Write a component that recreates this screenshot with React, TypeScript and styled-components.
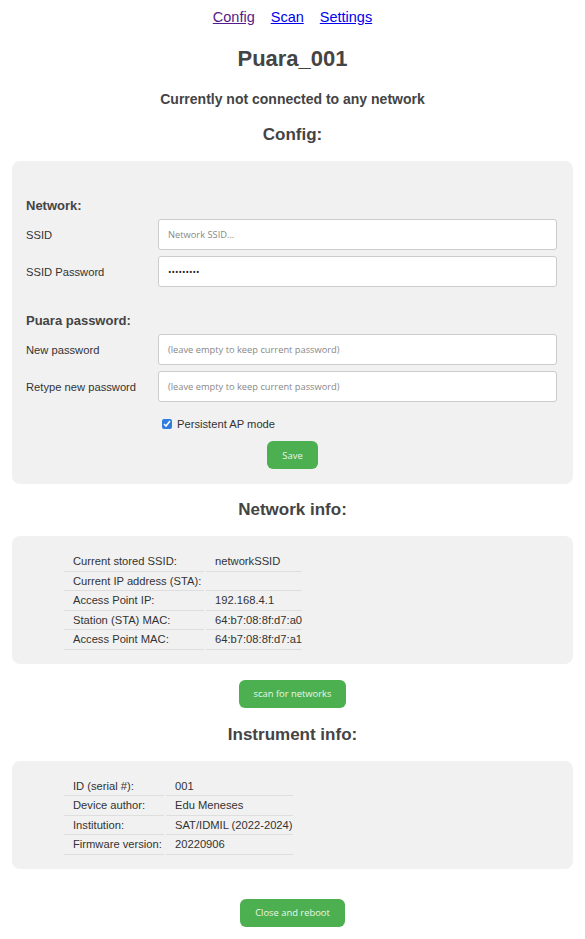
import styled, { createGlobalStyle } from 'styled-components';

const GlobalStyle = createGlobalStyle`
  body {
    margin: 0;
    background: #fff;
    font-family: "Liberation Sans", Arial, sans-serif;
    color: #444;
  }
`;

const Page = styled.div`
  padding: 0 12px 10px;
  display: flex;
  flex-direction: column;
  align-items: stretch;
`;

const Nav = styled.nav`
  display: flex;
  justify-content: center;
  gap: 16px;
  padding-top: 9px;
  font-size: 14.5px;
`;

const NavLink = styled.a<{ visited?: boolean }>`
  color: ${p => (p.visited ? '#551a8b' : '#0000ee')};
  text-decoration: underline;
`;

const Title = styled.h1`
  margin: 21px 0 0;
  text-align: center;
  font-size: 22px;
  color: #444;
`;

const Status = styled.h3`
  margin: 19px 0 0;
  text-align: center;
  font-size: 14px;
  color: #444;
`;

const SectionTitle = styled.h2<{ offset?: number }>`
  margin: ${p => p.offset ?? 0}px 0 0;
  text-align: center;
  font-size: 17px;
  color: #444;
`;

const Panel = styled.div`
  background: #f1f1f1;
  border-radius: 8px;
`;

const FormPanel = styled(Panel)`
  padding: 37px 14px 15px;
  display: flex;
  flex-direction: column;
`;

const Group = styled.div<{ spaced?: boolean }>`
  font-weight: bold;
  font-size: 13px;
  color: #444;
  margin: ${p => (p.spaced ? '20px' : '0')} 0 6px;
`;

const FieldRow = styled.div`
  display: grid;
  grid-template-columns: 132px 1fr;
  align-items: center;
  margin-bottom: 6px;
  font-size: 11.2px;
  color: #333;
`;

const Input = styled.input`
  height: 31px;
  box-sizing: border-box;
  border: 1px solid #ccc;
  border-radius: 3px;
  background: #fff;
  padding: 0 9px;
  margin-right: 2px;
  font-family: "Open Sans", sans-serif;
  font-size: 9.3px;
  color: #222;
  &::placeholder {
    color: #888;
  }
`;

const CheckRow = styled.label`
  display: flex;
  align-items: center;
  gap: 5px;
  margin: 10px 0 0 136px;
  font-size: 11.2px;
  color: #333;
  input {
    margin: 0;
    width: 10px;
    height: 10px;
    accent-color: #2f7de1;
  }
`;

const GreenButton = styled.button<{ offset?: number }>`
  align-self: center;
  margin-top: ${p => p.offset ?? 0}px;
  background: #4caf50;
  color: #eaf6ea;
  border: none;
  border-radius: 6px;
  font-family: "Open Sans", sans-serif;
  font-size: 9.4px;
  height: 28px;
  padding: 0 15px;
`;

const InfoPanel = styled(Panel)`
  padding: 16px 50px 14px;
`;

const InfoTable = styled.table`
  border-spacing: 2px 0;
  font-size: 11.2px;
  color: #333;
  td {
    border-bottom: 1px solid #dedede;
    height: 18.5px;
    padding: 0 0 0 9px;
    white-space: nowrap;
  }
`;

const Stack = styled.div`
  display: flex;
  flex-direction: column;
  gap: 16px;
  margin-top: 18px;
`;

const networkInfo: [string, string][] = [
  ['Current stored SSID:', 'networkSSID'],
  ['Current IP address (STA):', ''],
  ['Access Point IP:', '192.168.4.1'],
  ['Station (STA) MAC:', '64:b7:08:8f:d7:a0'],
  ['Access Point MAC:', '64:b7:08:8f:d7:a1'],
];

const instrumentInfo: [string, string][] = [
  ['ID (serial #):', '001'],
  ['Device author:', 'Edu Meneses'],
  ['Institution:', 'SAT/IDMIL (2022-2024)'],
  ['Firmware version:', '20220906'],
];

function Info({ rows, col }: { rows: [string, string][]; col: number }) {
  return (
    <InfoTable>
      <tbody>
        {rows.map(([k, v]) => (
          <tr key={k}>
            <td style={{ width: col }}>{k}</td>
            <td>{v}</td>
          </tr>
        ))}
      </tbody>
    </InfoTable>
  );
}

export default function App() {
  return (
    <>
      <GlobalStyle />
      <Page>
        <Nav>
          <NavLink href="#" visited>Config</NavLink>
          <NavLink href="#">Scan</NavLink>
          <NavLink href="#">Settings</NavLink>
        </Nav>
        <Title>Puara_001</Title>
        <Status>Currently not connected to any network</Status>
        <Stack>
          <SectionTitle>Config:</SectionTitle>
          <FormPanel>
            <Group>Network:</Group>
            <FieldRow>
              SSID
              <Input placeholder="Network SSID..." />
            </FieldRow>
            <FieldRow>
              SSID Password
              <Input type="password" defaultValue="password1" />
            </FieldRow>
            <Group spaced>Puara password:</Group>
            <FieldRow>
              New password
              <Input type="password" placeholder="(leave empty to keep current password)" />
            </FieldRow>
            <FieldRow>
              Retype new password
              <Input type="password" placeholder="(leave empty to keep current password)" />
            </FieldRow>
            <CheckRow>
              <input type="checkbox" defaultChecked />
              Persistent AP mode
            </CheckRow>
            <GreenButton offset={11}>Save</GreenButton>
          </FormPanel>
          <SectionTitle>Network info:</SectionTitle>
          <InfoPanel>
            <Info rows={networkInfo} col={131} />
          </InfoPanel>
          <GreenButton>scan for networks</GreenButton>
          <SectionTitle offset={1}>Instrument info:</SectionTitle>
          <InfoPanel>
            <Info rows={instrumentInfo} col={91} />
          </InfoPanel>
          <GreenButton offset={14}>Close and reboot</GreenButton>
        </Stack>
      </Page>
    </>
  );
}
